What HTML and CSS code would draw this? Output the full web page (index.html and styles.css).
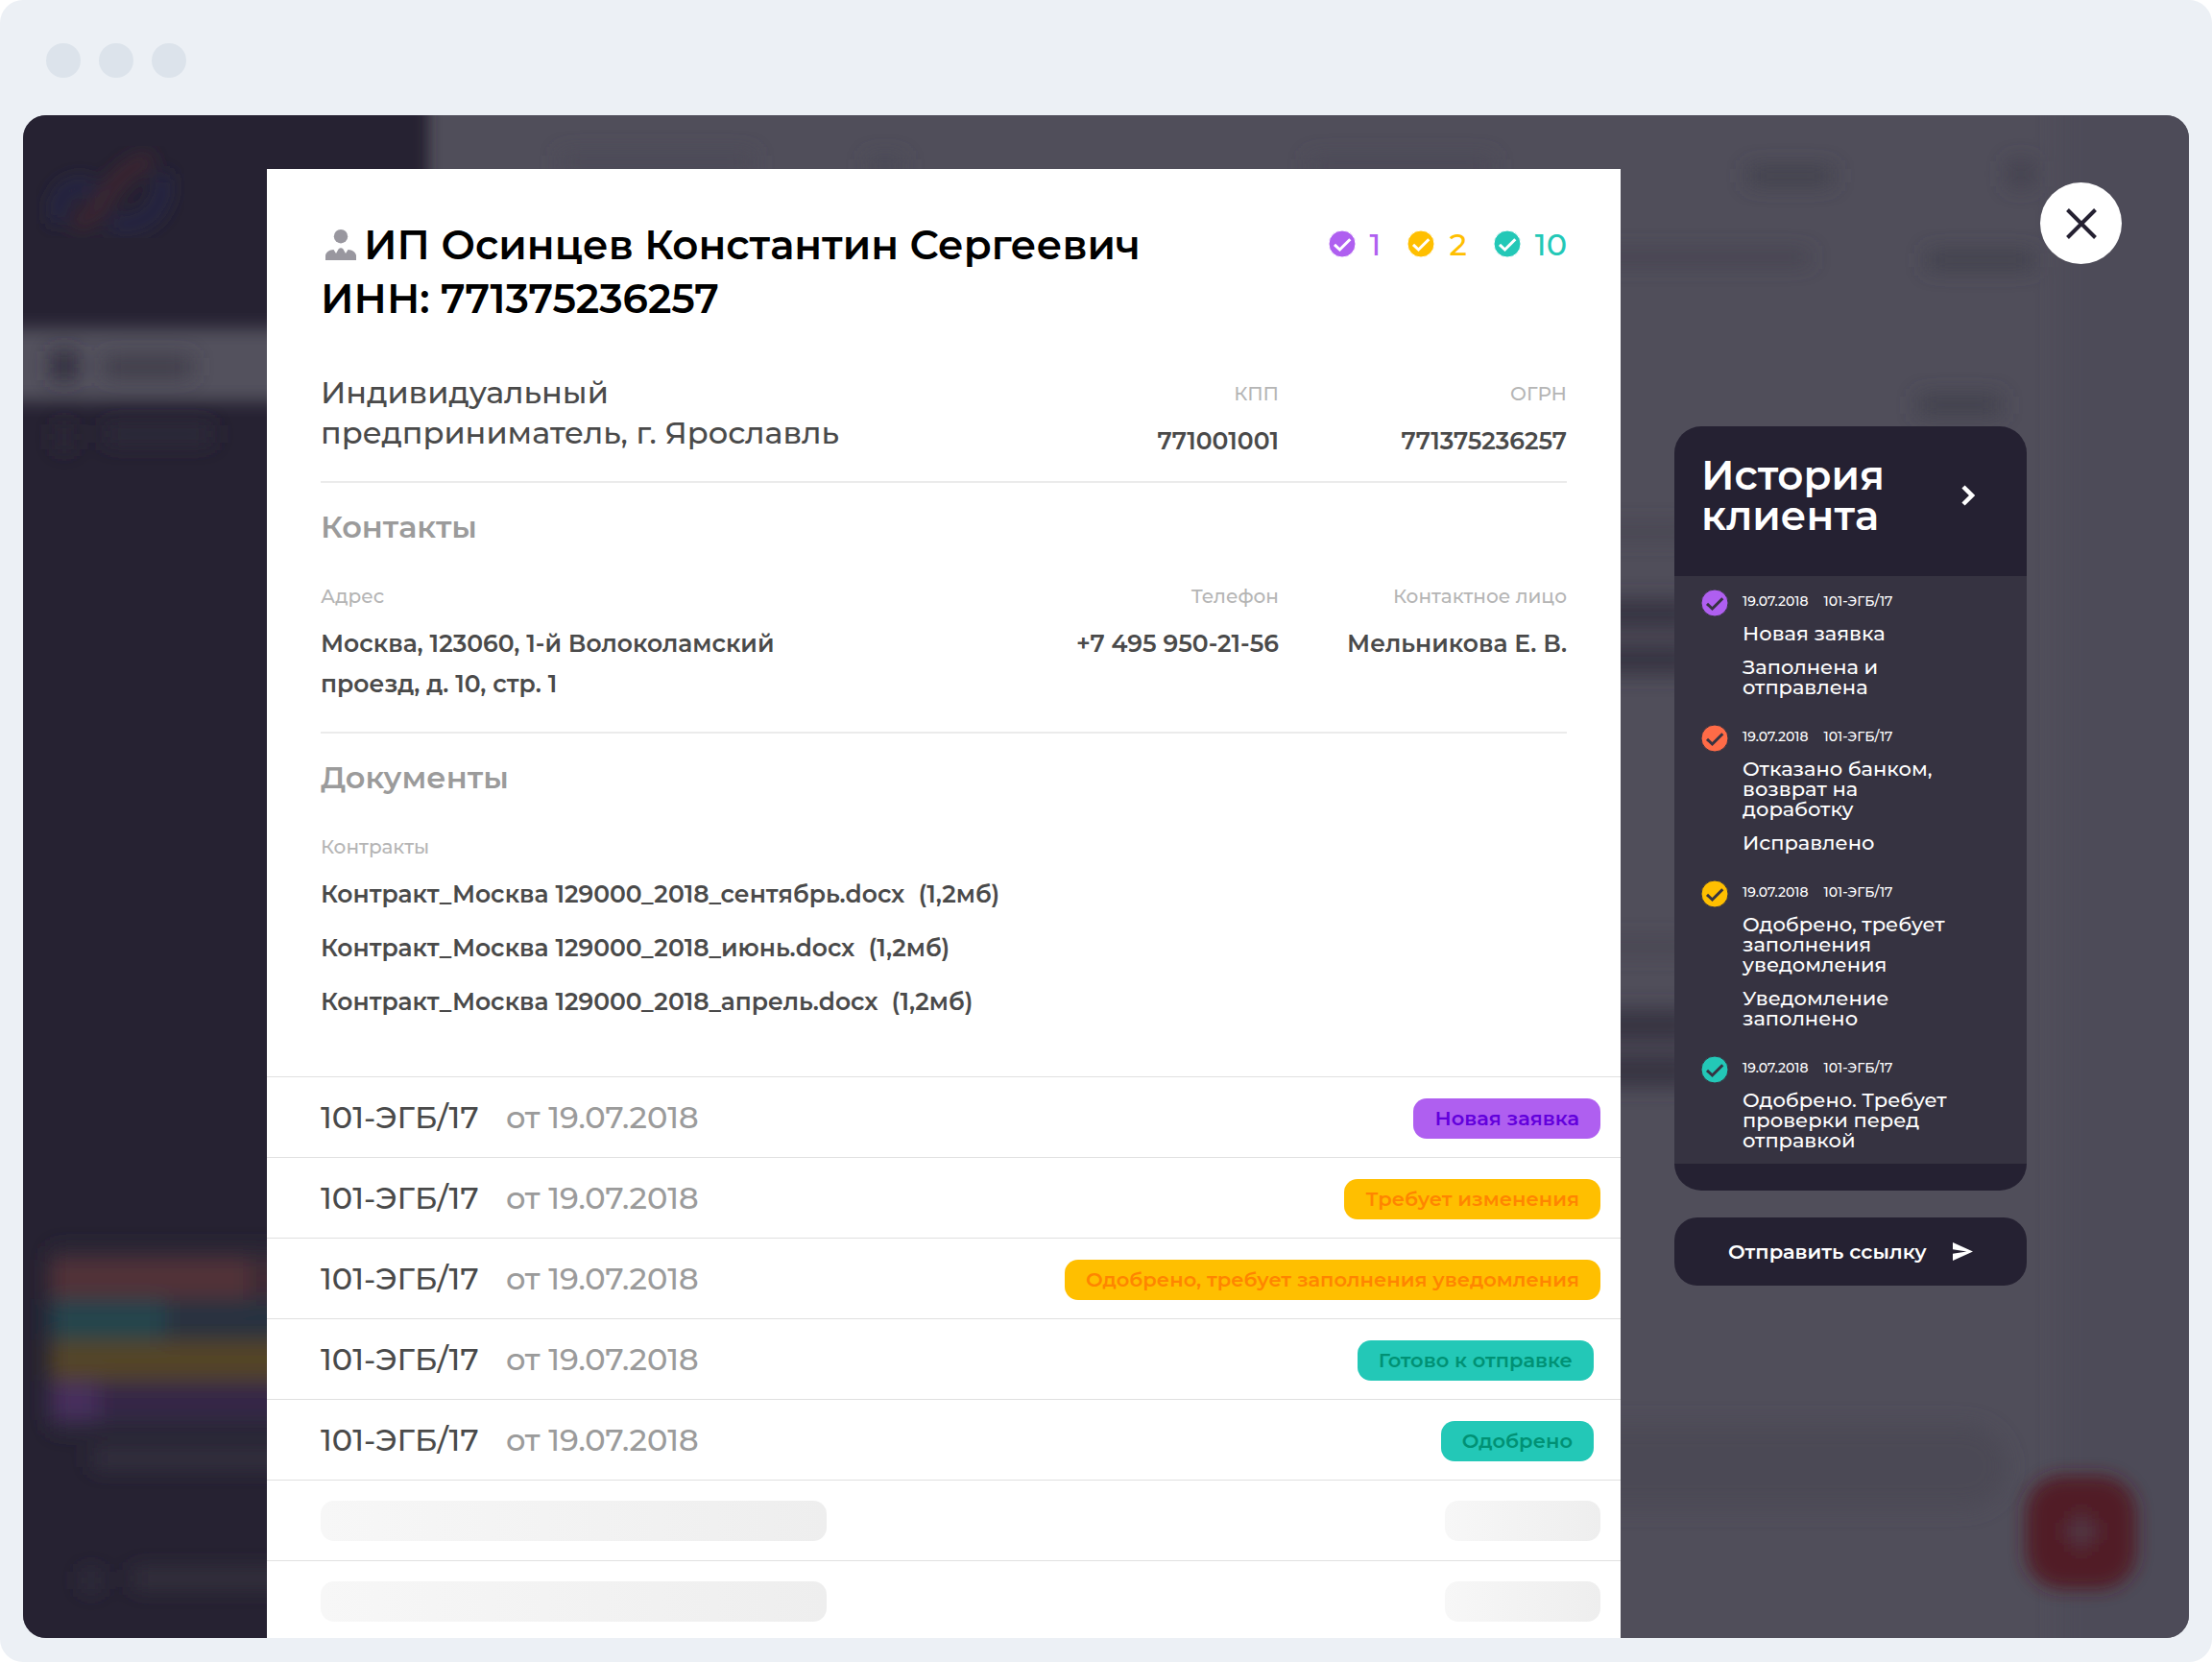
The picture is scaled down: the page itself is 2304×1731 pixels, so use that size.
FILE: index.html
```html
<!DOCTYPE html>
<html lang="ru">
<head>
<meta charset="utf-8">
<meta name="viewport" content="width=device-width, initial-scale=1">
<title>ИП Осинцев Константин Сергеевич</title>
<link rel="stylesheet" href="styles.css">
</head>
<body>
<svg class="sprite" aria-hidden="true">
  <symbol id="check" viewBox="0 0 28 28">
    <circle cx="14" cy="14" r="14" fill="currentColor"/>
    <path class="tick" d="M6 14.8 11.5 20 22.3 9.2" fill="none" stroke-width="3"/>
  </symbol>
</svg>
<div class="window">
  <header class="titlebar" aria-hidden="true">
    <span class="dot"></span><span class="dot"></span><span class="dot"></span>
  </header>

  <div class="stage">
    <svg class="backdrop" viewBox="0 0 2256 1586" preserveAspectRatio="none" aria-hidden="true">
      <defs>
        <filter id="soft" x="-5%" y="-5%" width="110%" height="110%"><feGaussianBlur stdDeviation="11"/></filter>
        <filter id="edge" x="-20%" y="-20%" width="140%" height="140%"><feGaussianBlur stdDeviation="9"/></filter>
        <filter id="side" x="-10%" y="-10%" width="120%" height="120%"><feGaussianBlur stdDeviation="7"/></filter>
      </defs>
      <rect x="-60" y="-60" width="482" height="1706" fill="#252132" filter="url(#side)"/>
      <rect x="-60" y="222" width="482" height="76" fill="#53515d" filter="url(#edge)"/>
      <g filter="url(#edge)" fill="none" stroke-width="17">
        <path d="M38 112C30 82 50 66 74 78" stroke="#262844"/>
        <path d="M144 62C152 90 132 122 90 112" stroke="#262845"/>
        <path d="M54 114C88 102 88 58 134 46" stroke="#3d2530"/>
      </g>
      <g filter="url(#soft)">
        <rect x="2121" y="-40" width="200" height="1666" fill="#4e4c58"/>
        <rect x="30" y="246" width="26" height="30" fill="#2f2c3a"/>
        <rect x="84" y="252" width="92" height="20" fill="#3d3b47"/>
        <rect x="34" y="322" width="18" height="26" fill="#2e2b39"/>
        <rect x="84" y="322" width="114" height="20" fill="#2f2c3a"/>
        <rect x="30" y="1180" width="400" height="190" fill="#2c2938"/>
        <rect x="28" y="1192" width="300" height="40" fill="#3e2934"/>
        <rect x="28" y="1192" width="208" height="40" fill="#533138"/>
        <rect x="28" y="1233" width="300" height="42" fill="#26323f"/>
        <rect x="28" y="1233" width="120" height="42" fill="#22454e"/>
        <rect x="28" y="1276" width="300" height="42" fill="#544426"/>
        <rect x="28" y="1319" width="300" height="40" fill="#362847"/>
        <rect x="28" y="1319" width="50" height="40" fill="#472f5d"/>
        <rect x="72" y="1389" width="240" height="20" fill="#353240"/>
        <rect x="62" y="1516" width="18" height="20" fill="#353240"/>
        <rect x="114" y="1514" width="200" height="20" fill="#34313e"/>
        <rect x="560" y="40" width="200" height="18" fill="#4c4a56"/>
        <rect x="880" y="44" width="36" height="18" fill="#4a4854"/>
        <rect x="1340" y="44" width="190" height="18" fill="#4c4a56"/>
        <rect x="1797" y="54" width="88" height="18" fill="#413f4b"/>
        <rect x="2068" y="48" width="26" height="26" fill="#43414d"/>
        <rect x="1600" y="142" width="261" height="12" fill="#43414d"/>
        <rect x="1983" y="142" width="112" height="18" fill="#413f4b"/>
        <rect x="1974" y="292" width="86" height="20" fill="#413f4b"/>
        <rect x="1600" y="428" width="140" height="12" fill="#45434f"/>
        <rect x="1600" y="505" width="140" height="29" fill="#343140"/>
        <rect x="1600" y="552" width="140" height="29" fill="#343140"/>
        <rect x="1600" y="860" width="140" height="12" fill="#45434f"/>
        <rect x="1600" y="932" width="140" height="32" fill="#343140"/>
        <rect x="1600" y="979" width="140" height="32" fill="#343140"/>
        <rect x="1600" y="1364" width="466" height="86" rx="43" fill="#4b4955"/>
      </g>
      <g filter="url(#edge)">
        <rect x="2086" y="1417" width="115" height="118" rx="38" fill="#511a27"/>
        <path d="M2144 1456v38M2125 1475h38" stroke="#4f3b48" stroke-width="9"/>
      </g>
    </svg>

    <div class="overlay">
      <main class="sheet">
        <div class="head">
          <div class="client">
            <h1 class="name">
              <svg class="person" viewBox="0 0 32 32" aria-hidden="true"><ellipse cx="16" cy="7.2" rx="7.2" ry="7.2"/><path d="M0 32V27C1 23 4 21.500 8.500 21 L11 25 13.500 20.500Q16 18 18.500 20.500L21 25 23.500 21C28 21.500 31 23 32 27V32Z"/></svg>ИП Осинцев Константин Сергеевич
            </h1>
            <p class="inn">ИНН: 771375236257</p>
          </div>
          <ul class="counters">
            <li class="counter violet"><svg class="mark"><use href="#check"/></svg>1</li>
            <li class="counter amber"><svg class="mark"><use href="#check"/></svg>2</li>
            <li class="counter teal"><svg class="mark"><use href="#check"/></svg>10</li>
          </ul>
        </div>

        <section class="section">
          <div class="facts">
            <p class="about">Индивидуальный предприниматель, г. Ярославль</p>
            <dl class="fact right"><dt>КПП</dt><dd>771001001</dd></dl>
            <dl class="fact right"><dt>ОГРН</dt><dd>771375236257</dd></dl>
          </div>
        </section>

        <section class="section">
          <h2>Контакты</h2>
          <div class="facts">
            <dl class="fact address"><dt>Адрес</dt><dd>Москва, 123060, 1-й Волоколамский проезд, д. 10, стр. 1</dd></dl>
            <dl class="fact right"><dt>Телефон</dt><dd>+7 495 950-21-56</dd></dl>
            <dl class="fact right"><dt>Контактное лицо</dt><dd>Мельникова Е. В.</dd></dl>
          </div>
        </section>

        <section class="section">
          <h2>Документы</h2>
          <h3>Контракты</h3>
          <ul class="docs">
            <li><a href="#">Контракт_Москва 129000_2018_сентябрь.docx</a><span>(1,2мб)</span></li>
            <li><a href="#">Контракт_Москва 129000_2018_июнь.docx</a><span>(1,2мб)</span></li>
            <li><a href="#">Контракт_Москва 129000_2018_апрель.docx</a><span>(1,2мб)</span></li>
          </ul>
        </section>

        <table class="orders">
          <colgroup><col class="col-number"><col class="col-date"><col></colgroup>
          <tbody>
            <tr><td class="number">101-ЭГБ/17</td><td class="date">от 19.07.2018</td><td class="status"><span class="badge violet">Новая заявка</span></td></tr>
            <tr><td class="number">101-ЭГБ/17</td><td class="date">от 19.07.2018</td><td class="status"><span class="badge amber">Требует изменения</span></td></tr>
            <tr><td class="number">101-ЭГБ/17</td><td class="date">от 19.07.2018</td><td class="status"><span class="badge amber">Одобрено, требует заполнения уведомления</span></td></tr>
            <tr><td class="number">101-ЭГБ/17</td><td class="date">от 19.07.2018</td><td class="status"><span class="badge teal">Готово к отправке</span></td></tr>
            <tr><td class="number">101-ЭГБ/17</td><td class="date">от 19.07.2018</td><td class="status"><span class="badge teal">Одобрено</span></td></tr>
            <tr><td class="number" colspan="2"><div class="skeleton wide"></div></td><td class="status"><div class="skeleton"></div></td></tr>
            <tr><td class="number" colspan="2"><div class="skeleton wide"></div></td><td class="status"><div class="skeleton"></div></td></tr>
          </tbody>
        </table>
      </main>

      <aside class="side">
        <button class="close" type="button" aria-label="Закрыть">
          <svg viewBox="0 0 32 32" aria-hidden="true"><path d="M1.500 1.500 30.500 30.500M30.500 1.500 1.500 30.500" fill="none" stroke="#252132" stroke-width="4"/></svg>
        </button>
        <section class="history">
          <header class="history-head">
            <h2>История клиента</h2>
            <svg class="chevron" viewBox="0 0 14 22" aria-hidden="true"><path d="M2 2 11 11 2 20" fill="none" stroke="#fff" stroke-width="4.500"/></svg>
          </header>
          <ol class="events">
            <li class="event">
              <svg class="mark violet"><use href="#check"/></svg>
              <div class="event-body">
                <p class="meta"><time>19.07.2018</time><span>101-ЭГБ/17</span></p>
                <p>Новая заявка</p>
                <p>Заполнена и отправлена</p>
              </div>
            </li>
            <li class="event">
              <svg class="mark coral"><use href="#check"/></svg>
              <div class="event-body">
                <p class="meta"><time>19.07.2018</time><span>101-ЭГБ/17</span></p>
                <p>Отказано банком, возврат на доработку</p>
                <p>Исправлено</p>
              </div>
            </li>
            <li class="event">
              <svg class="mark amber"><use href="#check"/></svg>
              <div class="event-body">
                <p class="meta"><time>19.07.2018</time><span>101-ЭГБ/17</span></p>
                <p>Одобрено, требует заполнения уведомления</p>
                <p>Уведомление заполнено</p>
              </div>
            </li>
            <li class="event">
              <svg class="mark teal"><use href="#check"/></svg>
              <div class="event-body">
                <p class="meta"><time>19.07.2018</time><span>101-ЭГБ/17</span></p>
                <p>Одобрено. Требует проверки перед отправкой</p>
              </div>
            </li>
          </ol>
        </section>
        <button class="send" type="button">Отправить ссылку
          <svg viewBox="0 0 21 19" aria-hidden="true"><path d="M0 0 21 9.500 0 19V11.800L14.500 9.500 0 7.200Z" fill="#fff"/></svg>
        </button>
      </aside>
    </div>
  </div>
</div>
</body>
</html>
```

FILE: styles.css
```css
*, *::before, *::after { box-sizing: border-box; }

html { background: #fff; }

body {
  margin: 0;
  font-family: Montserrat, Inter, "Noto Sans", sans-serif;
  color: #4a4a4a;
}

h1, h2, h3, p, dl, dd, ul, ol { margin: 0; padding: 0; }
ul, ol { list-style: none; }
button { border: 0; font: inherit; cursor: pointer; }

.sprite { position: absolute; width: 0; height: 0; }

/* Browser frame */
.window {
  min-height: 100vh;
  display: flex;
  flex-direction: column;
  padding: 0 24px 25px;
  border-radius: 24px;
  background: #ecf0f5;
}

.titlebar {
  display: flex;
  gap: 19px;
  padding: 45px 24px 39px;
}

.dot {
  width: 36px;
  height: 36px;
  border-radius: 50%;
  background: #dce3eb;
}

.stage {
  position: relative;
  flex: 1;
  display: flex;
  overflow: hidden;
  border-radius: 24px;
  background: #504e5a;
}

.backdrop {
  position: absolute;
  inset: 0;
  width: 100%;
  height: 100%;
}

.overlay {
  position: relative;
  flex: 1;
  display: grid;
  grid-template-columns: 254fr 1410fr 592fr;
  padding-top: 56px;
}

/* Client sheet */
.sheet {
  grid-column: 2;
  padding-top: 51px;
  background: #fff;
}

.head {
  display: flex;
  justify-content: space-between;
  margin: 0 56px 49px;
}

.name, .inn {
  font-size: 42px;
  font-weight: 600;
  line-height: 56px;
  color: #000;
}

.name {
  display: flex;
  align-items: center;
  gap: 8px;
  padding-left: 5px;
}

.person {
  width: 32px;
  height: 32px;
  fill: #99979f;
}

.counters {
  display: flex;
  gap: 28px;
  font-size: 32px;
  font-weight: 500;
}

.counter {
  display: flex;
  align-items: center;
  height: 54px;
  gap: 15px;
}

.mark {
  flex: none;
  width: 28px;
  height: 28px;
  stroke: #fff;
}

.violet { color: #af5ff0; }
.amber { color: #ffbf00; }
.teal { color: #23c8b7; }
.coral { color: #ff6b47; }

.section { margin: 0 56px; }

.section + .section {
  padding-top: 25px;
  border-top: 2px solid #ebebeb;
}

.section h2 {
  margin-bottom: 37px;
  font-size: 32px;
  font-weight: 600;
  line-height: 42px;
  color: #9b9b9b;
}

.facts {
  display: grid;
  grid-template-columns: 1fr 300px 300px;
  padding-bottom: 29px;
}

.about {
  padding-right: 136px;
  font-size: 32px;
  font-weight: 500;
  line-height: 42px;
}

.about ~ .fact { padding-top: 8px; }
.facts:has(.about) { padding-bottom: 21px; }

.fact dt, .section h3 {
  margin-bottom: 14px;
  font-size: 20px;
  font-weight: 500;
  line-height: 28px;
  color: #b5b5b5;
}

.fact dd {
  font-size: 25px;
  font-weight: 600;
  line-height: 42px;
}

.address { padding-right: 136px; }
.right { text-align: right; }

.docs {
  display: grid;
  gap: 14px;
  margin-bottom: 57px;
  font-size: 25px;
  font-weight: 600;
  line-height: 42px;
}

.docs li { display: flex; gap: 14px; }
.docs a { color: inherit; text-decoration: none; }

.orders {
  width: 100%;
  table-layout: fixed;
  border-collapse: collapse;
}

.col-number { width: 249px; }
.col-date { width: 400px; }

.orders tr {
  height: 84px;
  border-top: 1px solid #e0e0e0;
}

.orders td {
  padding: 0;
  font-size: 32px;
  font-weight: 500;
  line-height: 42px;
}

.orders .number { padding-left: 56px; }
.orders .date { color: #9b9b9b; }
.orders .status { padding-right: 21px; text-align: right; white-space: nowrap; }

.orders tr:last-child { height: 78px; }
.orders tr:last-child td { padding-top: 21px; vertical-align: top; }

.badge {
  display: inline-block;
  padding: 0 22px;
  border-radius: 14px;
  font-size: 21px;
  font-weight: 600;
  line-height: 42px;
  vertical-align: middle;
}

.badge.violet { background: #af5ff0; color: #6200dc; }
.badge.amber { background: #ffbf00; color: #ff8500; }
.badge.teal { background: #23c8b7; color: #009174; margin-right: 7px; }

.skeleton {
  width: 162px;
  height: 42px;
  margin-left: auto;
  border-radius: 14px;
  background: linear-gradient(90deg, #f7f7f7, #eee);
}

.skeleton.wide { width: 527px; margin-left: 0; }

/* Right column */
.side {
  display: flex;
  flex-direction: column;
  padding: 14px 70px 0 56px;
}

.close {
  align-self: flex-end;
  display: grid;
  place-items: center;
  width: 85px;
  height: 85px;
  margin-bottom: 169px;
  padding: 0;
  border-radius: 50%;
  background: #fff;
}

.close svg { width: 32px; height: 32px; }

.history, .send {
  width: 367px;
  color: #fff;
  background: #252132;
}

.history {
  margin-bottom: 28px;
  padding-bottom: 28px;
  border-radius: 28px;
}

.history-head {
  display: flex;
  align-items: center;
  justify-content: space-between;
  padding: 30px 54px 42px 28px;
}

.history h2 {
  width: 240px;
  font-size: 42px;
  font-weight: 600;
  line-height: 42px;
}

.chevron { width: 14px; height: 22px; }

.events {
  display: grid;
  gap: 29px;
  padding: 14px 68px 14px 28px;
  background: #363341;
}

.event { display: flex; gap: 15px; }
.event .mark { stroke: #363341; }

.event-body {
  display: grid;
  gap: 14px;
  font-size: 21px;
  font-weight: 500;
  line-height: 21px;
}

.event-body .meta {
  display: flex;
  gap: 16px;
  margin-bottom: -3px;
  font-size: 14px;
  line-height: 24px;
}

.send {
  display: flex;
  align-items: center;
  justify-content: space-between;
  height: 71px;
  padding: 0 56px;
  border-radius: 24px;
  font-size: 21px;
  font-weight: 600;
}

.send svg { width: 21px; height: 19px; }
```
